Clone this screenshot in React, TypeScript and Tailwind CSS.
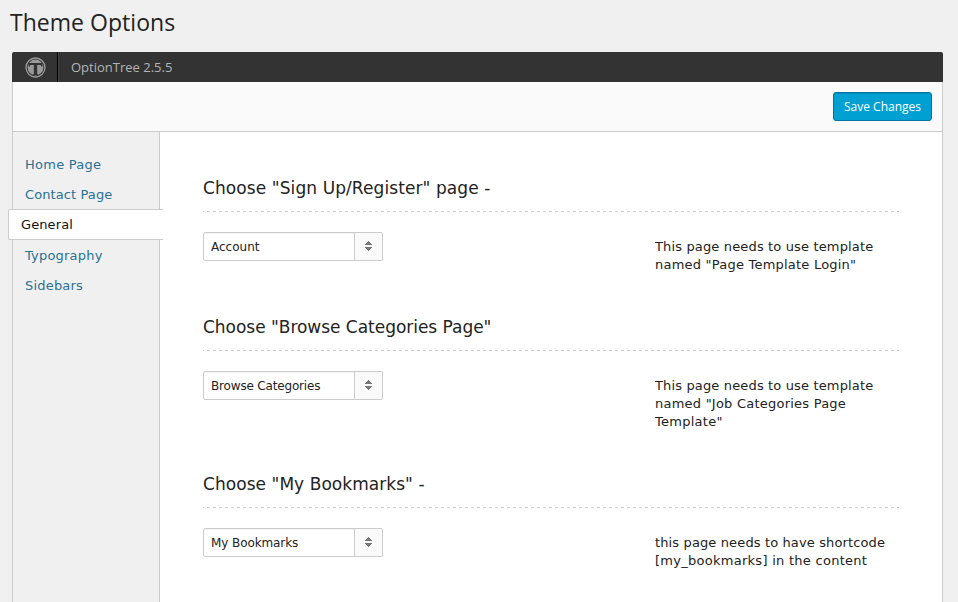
import React from "react";

const sections = [
  {
    title: 'Choose "Sign Up/Register" page -',
    titleSpacing: "tracking-[0.09px]",
    value: "Account",
    valueSpacing: "tracking-normal",
    lines: [
      { text: "This page needs to use template", spacing: "tracking-[0.150px]" },
      { text: 'named "Page Template Login"', spacing: "tracking-[0.220px]" },
    ],
    height: "h-[139px]",
  },
  {
    title: 'Choose "Browse Categories Page"',
    titleSpacing: "tracking-[-0.03px]",
    value: "Browse Categories",
    valueSpacing: "tracking-[-0.17px]",
    lines: [
      { text: "This page needs to use template", spacing: "tracking-[0.150px]" },
      { text: 'named "Job Categories Page', spacing: "tracking-[0.230px]" },
      { text: 'Template"', spacing: "tracking-[0.270px]" },
    ],
    height: "h-[157px]",
  },
  {
    title: 'Choose "My Bookmarks" -',
    titleSpacing: "tracking-[0.05px]",
    value: "My Bookmarks",
    valueSpacing: "tracking-[-0.09px]",
    lines: [
      { text: "this page needs to have shortcode", spacing: "tracking-[0.130px]" },
      { text: "[my_bookmarks] in the content", spacing: "tracking-[0.270px]" },
    ],
    height: "h-[139px]",
  },
];

const verdana = "font-[Verdana,'DejaVu_Sans',sans-serif]";
const openSans = "font-['Open_Sans',sans-serif]";

function Logo() {
  return (
    <svg width="21" height="21" viewBox="0 0 21 21" className="block">
      <circle cx="10.5" cy="10.5" r="9.5" fill="none" stroke="#999" strokeWidth="1.3" />
      <circle cx="10.5" cy="10.5" r="7.9" fill="#999" />
      <path d="M3.500 6h14v3.500h-1l-1-1.500h-3.300v8.700l1.300 1.300h-6l1.300-1.300V8H5.500l-1 1.500h-1z" fill="#333" />
    </svg>
  );
}

function NavItem({ label, spacing }: { label: string; spacing: string }) {
  return <li className={`h-[30px] pl-[12px] leading-[30px] text-[#2a7195] ${spacing}`}>{label}</li>;
}

function Select({ value, spacing }: { value: string; spacing: string }) {
  return (
    <div className="flex h-[29px] w-[180px] overflow-hidden rounded-[2px] border border-[#ccc] bg-white shadow-[inset_0_1px_1px_rgba(0,0,0,0.05)]">
      <span className={`w-[150px] pl-[7px] pt-px text-[12px] leading-[27px] text-[#222] ${spacing}`}>{value}</span>
      <span className="flex flex-1 items-center justify-center border-l border-[#ccc] bg-[#fafafa]">
        <svg width="7" height="10" viewBox="0 0 7 10" shapeRendering="crispEdges" fill="#777" className="mb-px block">
          <path d="M3 0h1v1h1v1h1v1h1v1H0V3h1V2h1V1h1zM0 6h7v1H6v1H5v1H4v1H3V9H2V8H1V7H0z" />
        </svg>
      </span>
    </div>
  );
}

export default function App() {
  return (
    <div className={`h-[602px] w-[958px] overflow-hidden bg-[#f0f0f0] ${verdana}`}>
      <h1 className={`h-[52px] pl-[10px] pt-[6px] text-[23px] leading-[33px] font-normal tracking-[0.03px] text-[#222] ${openSans}`}>Theme Options</h1>
      <div className="ml-[12px] w-[931px]">
        <header className={`flex h-[30px] overflow-hidden rounded-t-[2px] bg-[#333] text-[#b4b4b4] ${openSans}`}>
          <div className="flex w-[46px] items-center border-r border-black pl-[13px]">
            <Logo />
          </div>
          <div className="border-l border-[#444] pl-[12px] text-[13px] leading-[30px]">OptionTree 2.5.5</div>
        </header>
        <div className="border-x border-[#ccc]">
          <div className="flex h-[50px] justify-end border-b border-[#ccc] bg-[#fafafa] pr-[10px] pt-[10px]">
            <button className={`h-[29px] w-[99px] rounded-[3px] border border-[#0074a2] bg-[#00a0d2] text-[12px] leading-[27px] whitespace-nowrap text-white shadow-[inset_0_1px_0_rgba(0,0,0,0.1)] ${openSans}`}>
              Save Changes
            </button>
          </div>
          <div className="flex h-[470px] bg-white">
            <nav className="w-[147px] border-r border-[#ccc] bg-[#f0f0f0] pt-[18px] text-[13px]">
              <ul>
                <NavItem label="Home Page" spacing="tracking-[0.25px]" />
                <NavItem label="Contact Page" spacing="tracking-[0.1px]" />
                <li className="relative -mt-px -ml-[5px] mb-px h-[31px] w-[155px] rounded-l-[2px] border border-r-0 border-[#ccc] bg-white pl-[12px] leading-[29px] tracking-[0.1px] text-[#111]">General</li>
                <NavItem label="Typography" spacing="tracking-[0.2px]" />
                <NavItem label="Sidebars" spacing="tracking-[0.2px]" />
              </ul>
            </nav>
            <main className="w-[739px] pl-[43px] pt-[42px] text-[#222]">
              {sections.map((s) => (
                <section key={s.value} className={s.height}>
                  <h2 className={`h-[37px] text-[17px] leading-[28px] whitespace-nowrap ${s.titleSpacing}`}>{s.title}</h2>
                  <div className="h-px w-[696px] bg-[repeating-linear-gradient(90deg,#ccc_0_1px,transparent_1px_4px,#ccc_4px_6px)]" />
                  <div className="flex pt-[20px]">
                    <Select value={s.value} spacing={s.valueSpacing} />
                    <p className="ml-[272px] pt-[6px] text-[13px] leading-[18px] whitespace-nowrap">
                      {s.lines.map((l) => (
                        <span key={l.text} className={`block ${l.spacing}`}>{l.text}</span>
                      ))}
                    </p>
                  </div>
                </section>
              ))}
            </main>
          </div>
        </div>
      </div>
    </div>
  );
}
